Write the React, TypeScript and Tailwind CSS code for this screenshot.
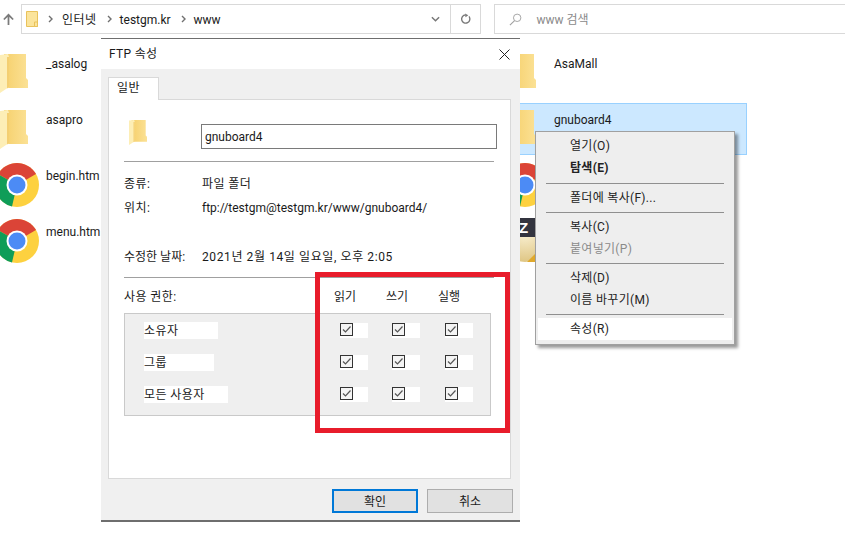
import type { ReactNode } from "react";

const FONT = "font-['Roboto','Noto_Sans_CJK_KR',sans-serif]";

function FolderBig({ className = "" }: { className?: string }) {
  return (
    <svg viewBox="0 0 28 39" className={className}>
      <defs>
        <linearGradient id="fb" x1="0" y1="0" x2="1" y2="0">
          <stop offset="0" stopColor="#f6d06c" />
          <stop offset="1" stopColor="#fbe195" />
        </linearGradient>
      </defs>
      <path d="M4 0H26V24L28 26V34H8Z" fill="url(#fb)" />
      <path d="M0 1L8 0L9 3V33L0 39Z" fill="#fdeeb6" />
      <path d="M9 3V33L7 34.5V3Z" fill="#f4cf72" />
    </svg>
  );
}

function Chrome() {
  return (
    <svg viewBox="0 0 44 44" className="w-[44px] h-[44px] mt-[4px] shrink-0">
      <circle cx="22" cy="22" r="22" fill="#fdd13f" />
      <path d="M22 22L3 11A22 22 0 0 1 41 11Z" fill="#db4437" />
      <path d="M22 22L3 11A22 22 0 0 0 17 43.5Z" fill="#0f9d58" />
      <circle cx="22" cy="22" r="10.5" fill="#ffffff" />
      <circle cx="22" cy="22" r="8.5" fill="#4c8bf5" />
    </svg>
  );
}

function ZIcon() {
  return (
    <svg viewBox="0 0 44 44" className="w-[44px] h-[44px] mt-[3px] shrink-0">
      <defs>
        <radialGradient id="zb" cx="0.5" cy="0.3" r="0.7">
          <stop offset="0" stopColor="#fbf3d8" />
          <stop offset="1" stopColor="#dfc684" />
        </radialGradient>
      </defs>
      <circle cx="22" cy="22" r="22" fill="url(#zb)" />
      <path d="M24 44L32 36L32 44Z" fill="#e0a92c" />
      <rect x="0" y="0" width="44" height="19" fill="#33343f" />
      <text x="16" y="15" fontSize="15" fontWeight="bold" fill="#ffffff" fontFamily="Liberation Sans">Z</text>
    </svg>
  );
}

function FileRow({ icon, label, selected }: { icon: ReactNode; label?: string; selected?: boolean }) {
  return (
    <div className="h-[56px]">
      <div className={`flex items-start ${selected ? "h-[52px] w-[244px] bg-[#cce8ff] border-y border-r border-[#99d1ff]" : "h-[56px]"}`}>
        <div className={`w-[51px] shrink-0 ${selected ? "-mt-px" : ""}`}>{icon}</div>
        {label ? (
          <span className={`text-[12px] leading-[16px] text-[#1a1a1a] whitespace-nowrap ${selected ? "mt-[8px]" : "mt-[9px]"}`}>{label}</span>
        ) : null}
      </div>
    </div>
  );
}

const folderIcon = <FolderBig className="w-[28px] h-[39px] ml-[5px] mt-[7px]" />;

function Check() {
  return (
    <div className="w-[28px] h-[15px] bg-white">
      <svg viewBox="0 0 13 13" className="w-[13px] h-[13px] mt-[1px]">
        <rect x="0.5" y="0.5" width="12" height="12" fill="#f4f4f4" stroke="#333333" />
        <path d="M3 6.5L5.5 9L10.5 3.5" fill="none" stroke="#555555" strokeWidth="1.2" />
      </svg>
    </div>
  );
}

function PermRow({ label, w }: { label: string; w: string }) {
  return (
    <div className="h-[32px] flex items-center">
      <div className="w-[215px] shrink-0 pl-[19px]">
        <div className={`bg-white h-[17px] leading-[19px] tracking-[0.4px] ${w}`}>{label}</div>
      </div>
      <div className="w-[52px]"><Check /></div>
      <div className="w-[53px]"><Check /></div>
      <div className="w-[28px]"><Check /></div>
    </div>
  );
}

function MenuItem({ label, bold, disabled, hot }: { label: string; bold?: boolean; disabled?: boolean; hot?: boolean }) {
  return (
    <div
      className={`h-[22px] leading-[23px] pl-[32px] tracking-[0.3px] ${bold ? "font-bold" : ""} ${disabled ? "text-[#8a8a8a]" : "text-[#222222]"} ${hot ? "bg-white" : ""}`}
    >
      {label}
    </div>
  );
}

function Sep({ first }: { first?: boolean }) {
  return <div className={`h-px bg-[#8f8f8f] mx-[8px] mb-[3px] ${first ? "mt-[4px]" : "mt-[3px]"}`} />;
}

function Crumb() {
  return (
    <svg viewBox="0 0 5 8" className="w-[5px] h-[8px] shrink-0">
      <path d="M1 1L4 4L1 7" fill="none" stroke="#707070" strokeWidth="1.4" />
    </svg>
  );
}

export default function App() {
  return (
    <div className={`relative w-[845px] h-[543px] overflow-hidden bg-white text-[12px] text-[#1a1a1a] ${FONT}`}>
      {/* Address bar */}
      <div className="h-[34px] pt-[4px] flex items-stretch">
        <div className="w-[21px] flex items-center">
          <svg viewBox="0 0 14 14" className="w-[13px] h-[13px] ml-[2px] mt-[1px]">
            <path d="M7 13V2M2 7L7 2L12 7" fill="none" stroke="#7b7b7b" strokeWidth="1.9" />
          </svg>
        </div>
        <div className="w-[431px] border border-[#d9d9d9] flex items-center text-[12px] pl-[4px]">
          <svg viewBox="0 0 12 16" className="w-[12px] h-[16px] mr-[10px]">
            <path d="M0.5 0.5H11.5V15.5H0.5Z" fill="#fbe49b" stroke="#e9c25b" />
            <path d="M8.5 11H11.5V15.5H8.5Z" fill="#fbe49b" stroke="#e9c25b" />
          </svg>
          <Crumb />
          <span className="ml-[9px] mt-[2px] tracking-[0.5px]">인터넷</span>
          <span className="ml-[10px]"><Crumb /></span>
          <span className="ml-[8px] mt-[2px]">testgm.kr</span>
          <span className="ml-[10px]"><Crumb /></span>
          <span className="ml-[8px] mt-[2px]">www</span>
          <svg viewBox="0 0 10 6" className="ml-auto mr-[10px] w-[9px] h-[6px]">
            <path d="M1 1L5 5L9 1" fill="none" stroke="#777" strokeWidth="1.6" />
          </svg>
        </div>
        <div className="w-[30px] border border-l-0 border-[#d9d9d9] flex items-center justify-center">
          <svg viewBox="0 0 12 12" className="w-[11px] h-[12px]">
            <path d="M9.8 3.2A4.5 4.5 0 1 1 6 1.5" fill="none" stroke="#777" strokeWidth="1.5" />
            <path d="M5.5 0L9 1.8L6 4Z" fill="#777" />
          </svg>
        </div>
        <div className="w-[351px] ml-[13px] border border-r-0 border-[#d9d9d9] flex items-center pl-[14px] text-[#8a8a8a]">
          <svg viewBox="0 0 14 14" className="w-[13px] h-[13px] mr-[14px]">
            <circle cx="8.8" cy="5.2" r="4" fill="none" stroke="#a0a0a0" strokeWidth="1" />
            <path d="M6 8.2L1 13" stroke="#a0a0a0" strokeWidth="1.2" />
          </svg>
          <span className="mt-[2px]">www 검색</span>
        </div>
      </div>

      {/* File area */}
      <div className="flex pt-[13px]">
        <div className="w-[503px] shrink-0 -ml-[5px] mr-[5px]">
          <FileRow icon={folderIcon} label="_asalog" />
          <FileRow icon={folderIcon} label="asapro" />
          <FileRow icon={<Chrome />} label="begin.htm" />
          <FileRow icon={<Chrome />} label="menu.htm" />
        </div>
        <div className="w-[250px]">
          <FileRow icon={folderIcon} label="AsaMall" />
          <FileRow icon={folderIcon} label="gnuboard4" selected />
          <FileRow icon={<Chrome />} />
          <FileRow icon={<ZIcon />} />
        </div>
      </div>

      {/* Context menu */}
      <div className="absolute left-[535px] top-[131px] w-[200px] h-[214px] bg-[#eeeeee] border border-[#a0a0a0] shadow-[3px_3px_3px_rgba(0,0,0,0.4)] pt-[3px] px-[2px]">
        <MenuItem label="열기(O)" />
        <MenuItem label="탐색(E)" bold />
        <Sep first />
        <MenuItem label="폴더에 복사(F)..." />
        <Sep />
        <MenuItem label="복사(C)" />
        <MenuItem label="붙여넣기(P)" disabled />
        <Sep />
        <MenuItem label="삭제(D)" />
        <MenuItem label="이름 바꾸기(M)" />
        <Sep />
        <MenuItem label="속성(R)" hot />
      </div>

      {/* Properties dialog */}
      <div className="absolute left-[101px] top-[38px] w-[419px] h-[484px] bg-[#f0f0f0] border-t border-b-2 border-[#6e6e6e] flex flex-col">
        <div className="h-[30px] bg-white shrink-0 flex items-center justify-between pl-[8px] pr-[10px]">
          <span className="tracking-[0.3px]">FTP 속성</span>
          <svg viewBox="0 0 11 11" className="w-[11px] h-[11px]">
            <path d="M0.5 0.5L10.5 10.5M10.5 0.5L0.5 10.5" stroke="#222" strokeWidth="1" />
          </svg>
        </div>
        <div className="pt-[8px] pl-[7px] pr-[9px] flex-1 flex flex-col">
          <div className="w-[51px] h-[23px] bg-white border border-b-0 border-[#d9d9d9] pl-[8px] leading-[20px] relative z-10 -mb-px tracking-[0.5px]">일반</div>
          <div className="h-[380px] bg-white border border-[#d9d9d9] pl-[15px] pr-[16px] flex flex-col">
            <div className="flex h-[49px] pt-[18px] items-start shrink-0">
              <FolderBig className="w-[18px] h-[29px] ml-[5px] shrink-0" />
              <div className="ml-[54px] mt-[6px] w-[296px] h-[25px] border border-[#7a7a7a] pl-[3px] leading-[25px] shrink-0">gnuboard4</div>
            </div>
            <div className="h-px bg-[#a0a0a0] mt-[12px]" />
            <div className="flex mt-[11px] h-[20px] leading-[22px]"><div className="w-[78px] tracking-[0.4px]">종류:</div><div className="tracking-[0.4px]">파일 폴더</div></div>
            <div className="flex mt-[4px] h-[20px] leading-[22px]"><div className="w-[78px] tracking-[0.4px]">위치:</div><div>ftp://testgm@testgm.kr/www/gnuboard4/</div></div>
            <div className="flex mt-[29px] h-[20px] leading-[22px]"><div className="w-[78px]">수정한 날짜:</div><div className="tracking-[0.6px]">2021년 2월 14일 일요일, 오후 2:05</div></div>
            <div className="h-px bg-[#a0a0a0] mt-[11px]" />
            <div className="flex mt-[8px] h-[20px] leading-[22px]">
              <div className="w-[210px] tracking-[0.4px]">사용 권한:</div>
              <div className="w-[52px]">읽기</div>
              <div className="w-[52px]">쓰기</div>
              <div>실행</div>
            </div>
            <div className="h-[103px] mt-[7px] w-[367px] bg-[#efefef] border border-[#c9c9c9] shrink-0">
              <PermRow label="소유자" w="w-[74px]" />
              <PermRow label="그룹" w="w-[70px]" />
              <PermRow label="모든 사용자" w="w-[84px]" />
            </div>
          </div>
          <div className="flex justify-end gap-[9px] mt-[10px] -mr-[2px]">
            <button className="w-[86px] h-[24px] pt-px bg-[#e1e1e1] border-2 border-[#0078d7] text-center">확인</button>
            <button className="w-[86px] h-[24px] pt-px bg-[#e1e1e1] border border-[#adadad] text-center">취소</button>
          </div>
        </div>
      </div>

      {/* Red annotation */}
      <div className="absolute left-[315px] top-[272px] w-[195px] h-[161px] border-[5px] border-[#e81c2b]" />
    </div>
  );
}
